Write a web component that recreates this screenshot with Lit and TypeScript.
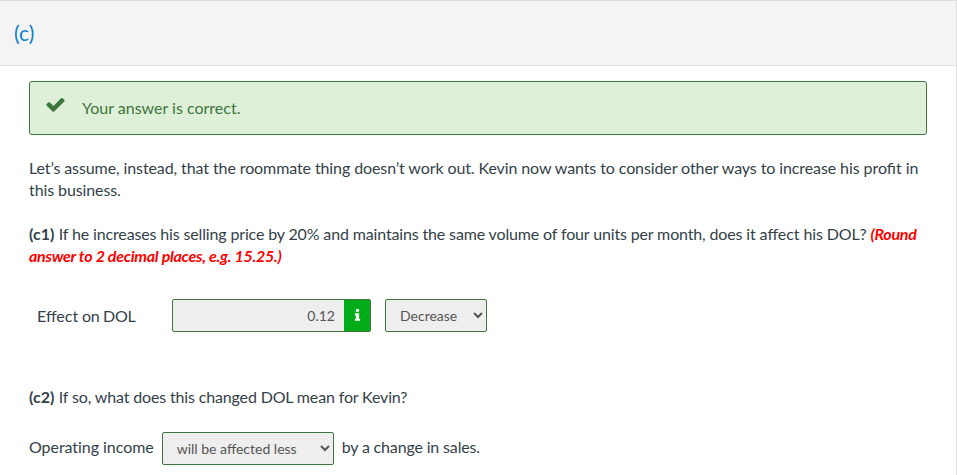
import { LitElement, html, css } from "lit";
import { customElement } from "lit/decorators.js";

@customElement("app-root")
export class AppRoot extends LitElement {
  static styles = css`
    :host { display: block; width: 957px; height: 475px; overflow: hidden; background: #fff; font-family: Lato, sans-serif; font-size: 16px; line-height: 22px; color: #333f48; box-sizing: border-box; border-right: 1px solid #e0e0e0; }
    .head { height: 64px; background: #f4f4f4; border-top: 1px solid #dedede; border-bottom: 1px solid #dedede; padding-left: 14px; display: flex; align-items: center; font-size: 21px; color: #0a82c4; }
    .body { padding: 15px 29px 0; }
    .alert { width: 898px; height: 54px; box-sizing: border-box; background: #dff0d8; border: 1px solid #3c763d; border-radius: 3px; display: flex; color: #3c763d; padding: 15px 0 0 15px; }
    .alert svg { width: 21px; height: 21px; margin-top: -3px; fill: #3c763d; }
    .alert span { margin-left: 16px; }
    p { margin: 0; width: 895px; }
    .p1 { margin-top: 22px; letter-spacing: -0.1px; }
    .p2 { margin-top: 22px; letter-spacing: -0.146px; }
    .lig { letter-spacing: 0; }
    b { letter-spacing: 0; margin-right: 0.5px; }
    .red { color: #f00; font-style: italic; font-weight: 700; letter-spacing: -0.27px; }
    .row { display: flex; align-items: center; margin-top: 32px; height: 33px; padding-left: 8px; }
    .lbl { width: 135px; letter-spacing: -0.3px; }
    .input { width: 199px; height: 33px; box-sizing: border-box; display: flex; border: 1px solid #3c763d; border-radius: 2px; background: #eee; font-size: 14px; color: #555; }
    .val { flex: 1; text-align: right; padding-right: 9px; line-height: 31px; }
    .info { width: 26px; background: #00ad18; display: flex; align-items: center; justify-content: center; }
    .info svg { width: 15px; height: 15px; fill: #fff; }
    .sel { height: 33px; box-sizing: border-box; border: 1px solid #3c763d; border-radius: 2px; background: #eee; font-family: Lato, sans-serif; font-size: 14px; color: #555; padding: 0 0 0 10px; margin: 0; }
    .s1 { width: 102px; margin-left: 14px; }
    .p3 { margin-top: 54px; letter-spacing: -0.15px; }
    .row2 { display: flex; align-items: flex-start; margin-top: 24px; height: 33px; }
    .row2 span { padding-top: 4px; }
    .op { letter-spacing: -0.05px; }
    .by { letter-spacing: -0.16px; }
    .s2 { width: 172px; margin: 0 8px; }
  `;

  render() {
    return html`
      <div class="head"><span>(c)</span></div>
      <div class="body">
        <div class="alert">
          <svg viewBox="0 0 1792 1792"><path d="M1671 566q0 40-28 68l-724 724-136 136q-28 28-68 28t-68-28l-136-136-362-362q-28-28-28-68t28-68l136-136q28-28 68-28t68 28l294 295 656-657q28-28 68-28t68 28l136 136q28 28 28 68z"/></svg>
          <span>Your answer is correct.</span>
        </div>
        <p class="p1">Let’s assume, instead, that the roommate thing doesn’t work out. Kevin now wants to consider other ways to increase his <span class="lig">profit</span> in this business.</p>
        <p class="p2"><b>(c1)</b> If he increases his selling price by 20% and maintains the same volume of four units per month, does it <span class="lig">affect</span> his DOL? <span class="red">(Round answer to 2 decimal places, e.g. 15.25.)</span></p>
        <div class="row">
          <div class="lbl"><span class="lig">Effect</span> on DOL</div>
          <div class="input"><div class="val">0.12</div><div class="info"><svg viewBox="0 0 1792 1792"><path d="M1216 1344v128q0 26-19 45t-45 19h-512q-26 0-45-19t-19-45v-128q0-26 19-45t45-19h64v-384h-64q-26 0-45-19t-19-45v-128q0-26 19-45t45-19h384q26 0 45 19t19 45v576h64q26 0 45 19t19 45zm-128-1152v192q0 26-19 45t-45 19h-256q-26 0-45-19t-19-45v-192q0-26 19-45t45-19h256q26 0 45 19t19 45z"/></svg></div></div>
          <select class="sel s1"><option>Decrease</option></select>
        </div>
        <p class="p3"><b>(c2)</b> If so, what does this changed DOL mean for Kevin?</p>
        <div class="row2">
          <span class="op">Operating income</span>
          <select class="sel s2"><option>will be affected less</option></select>
          <span class="by">by a change in sales.</span>
        </div>
      </div>
    `;
  }
}
